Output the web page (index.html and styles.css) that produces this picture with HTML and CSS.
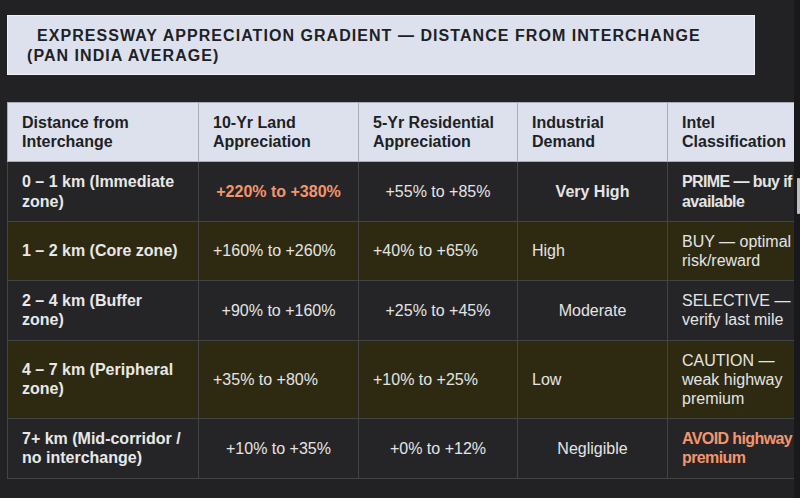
FILE: index.html
```html
<!DOCTYPE html>
<html lang="en">
<head>
<meta charset="utf-8">
<title>Expressway Appreciation Gradient</title>
<link rel="stylesheet" href="styles.css">
</head>
<body>
<div class="page">
  <main class="content">
    <div class="title-box">
      <h1 class="title">EXPRESSWAY APPRECIATION GRADIENT — DISTANCE FROM INTERCHANGE (PAN INDIA AVERAGE)</h1>
    </div>
    <div class="table-wrap">
      <table class="grid">
        <colgroup>
          <col class="c1"><col class="c2"><col class="c3"><col class="c4"><col class="c5">
        </colgroup>
        <thead>
          <tr>
            <th>Distance from Interchange</th>
            <th>10-Yr Land Appreciation</th>
            <th>5-Yr Residential Appreciation</th>
            <th>Industrial Demand</th>
            <th>Intel Classification</th>
          </tr>
        </thead>
        <tbody>
          <tr class="plain">
            <td class="zone">0 – 1 km (Immediate zone)</td>
            <td class="mid strong hot">+220% to +380%</td>
            <td class="mid">+55% to +85%</td>
            <td class="mid strong">Very High</td>
            <td class="strong tight">PRIME — buy if available</td>
          </tr>
          <tr class="hl">
            <td class="zone">1 – 2 km (Core zone)</td>
            <td>+160% to +260%</td>
            <td>+40% to +65%</td>
            <td>High</td>
            <td>BUY — optimal risk/reward</td>
          </tr>
          <tr class="plain">
            <td class="zone">2 – 4 km (Buffer zone)</td>
            <td class="mid">+90% to +160%</td>
            <td class="mid">+25% to +45%</td>
            <td class="mid">Moderate</td>
            <td>SELECTIVE — verify last mile</td>
          </tr>
          <tr class="hl">
            <td class="zone">4 – 7 km (Peripheral zone)</td>
            <td>+35% to +80%</td>
            <td>+10% to +25%</td>
            <td>Low</td>
            <td>CAUTION — weak highway premium</td>
          </tr>
          <tr class="plain">
            <td class="zone">7+ km (Mid-corridor / no interchange)</td>
            <td class="mid">+10% to +35%</td>
            <td class="mid">+0% to +12%</td>
            <td class="mid">Negligible</td>
            <td class="strong hot tight">AVOID highway premium</td>
          </tr>
        </tbody>
      </table>
    </div>
  </main>
  <div class="rail"><div class="thumb"></div></div>
</div>
</body>
</html>
```

FILE: styles.css
```css
html, body {
  margin: 0;
  padding: 0;
  height: 100%;
}

body {
  background: #222224;
  font-family: "Liberation Sans", Arial, Helvetica, sans-serif;
  color: #e4e4e4;
}

.page {
  display: flex;
  height: 498px;
  overflow: hidden;
}

.content {
  flex: 1;
  min-width: 0;
  padding: 15px 0 0 7px;
  overflow: hidden;
}

.title-box {
  width: 748px;
  box-sizing: border-box;
  background: #dde1ed;
  border: 1px solid #eef0f7;
  padding: 10px 40px 8px 19px;
  margin-bottom: 27px;
}

.title {
  margin: 0;
  font-size: 16px;
  line-height: 20px;
  font-weight: 700;
  letter-spacing: 1.05px;
  text-indent: 10px;
  color: #202124;
}

.table-wrap {
  overflow: hidden;
}

.grid {
  border-collapse: collapse;
  table-layout: fixed;
  width: 810px;
  font-size: 16px;
  line-height: 19.2px;
}

.c1 { width: 191px; }
.c2 { width: 160px; }
.c3 { width: 159px; }
.c4 { width: 150px; }
.c5 { width: 150px; }

.grid th,
.grid td {
  padding: 10px 14px;
  text-align: left;
  vertical-align: middle;
}

.grid th {
  background: #dde1ed;
  color: #202124;
  font-weight: 700;
  border: 1px solid #a9adb8;
}

.grid td {
  border: 1px solid #444446;
  font-weight: 400;
}

.plain td {
  background: #252527;
}

.hl td {
  background: #2e2a11;
}

.grid td.zone {
  font-weight: 700;
  color: #e8e8e8;
}

.grid td.mid {
  text-align: center;
}

.grid td.strong {
  font-weight: 700;
}

.grid td.tight {
  letter-spacing: -0.6px;
}

.grid td.hot {
  color: #f4956c;
}

.rail {
  width: 6px;
  flex: none;
  background: #19191b;
  display: flex;
  flex-direction: column;
  align-items: flex-end;
}

.thumb {
  margin-top: 178px;
  width: 3px;
  height: 36px;
  background: #bdbdc0;
  border-radius: 1px;
}
```
